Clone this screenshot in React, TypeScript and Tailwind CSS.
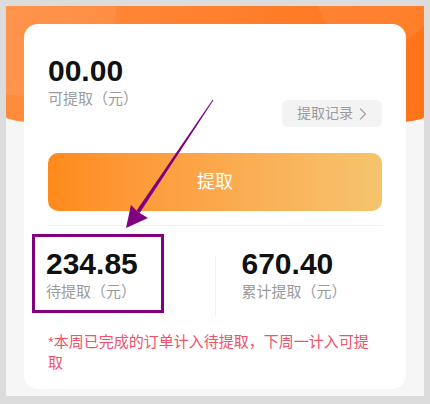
import React from 'react';

const cjk = "font-['Liberation_Sans','Noto_Sans_CJK_SC',sans-serif]";

const Stat: React.FC<{ value: string; label: string; className?: string }> = ({ value, label, className }) => (
  <div className={className}>
    <p className="text-[30px] leading-[36px] font-bold text-[#111]">{value}</p>
    <p className="text-[15px] leading-[20px] text-[#9b9b9b]">{label}</p>
  </div>
);

export default function App() {
  return (
    <div className={`relative w-[430px] h-[404px] bg-[#dcdcdc] pt-[6px] px-[6px] pb-[8px] ${cjk}`}>
      <div className="relative h-full bg-[#f6f6f6] overflow-hidden">
        {/* orange header */}
        <div className="relative h-[123px] rounded-b-[50%_12px] bg-linear-to-r from-[#ff8c3e] to-[#ff7419] overflow-hidden">
          <div className="absolute -left-[70px] -top-[90px] w-[180px] h-[180px] rounded-full bg-white/[0.07]" />
          <div className="absolute left-[310px] -top-[70px] w-[120px] h-[110px] rounded-full bg-white/[0.07]" />
        </div>

        {/* card */}
        <div className="relative -mt-[105px] mx-[18px] bg-white rounded-[14px] px-6 pt-[29px] pb-4">
          <div className="flex items-start justify-between">
            <Stat value="00.00" label="可提取（元）" />
            <button className="mt-[47px] h-[27px] w-[100px] rounded-[6px] bg-[#f3f3f3] flex items-center justify-center gap-[6px] text-[14px] text-[#9b9b9b]">
              <span>提取记录</span>
              <svg width="8" height="12" viewBox="0 0 8 12" fill="none">
                <path d="M1.5 1 L6.5 6 L1.5 11" stroke="#a5a5a5" strokeWidth="1.3" strokeLinecap="round" strokeLinejoin="round" />
              </svg>
            </button>
          </div>

          <button className="mt-[26px] w-full h-[58px] rounded-[10px] bg-linear-to-r from-[#ff8a1a] to-[#f5c46e] text-white text-[18px]">
            提取
          </button>

          <div className="mt-[14px] h-px bg-[#f2f2f2]" />

          <div className="mt-5 flex">
            <div className="flex-1">
              <Stat value="234.85" label="待提取（元）" className="-ml-[2px]" />
            </div>
            <div className="w-px h-[60px] mt-[11px] bg-[#f0f0f0]" />
            <div className="flex-1">
              <Stat value="670.40" label="累计提取（元）" className="pl-[26px]" />
            </div>
          </div>

          <p className="mt-[14px] text-[15px] leading-[21px] text-[#f2506b]">
            *本周已完成的订单计入待提取，下周一计入可提取
          </p>
        </div>
      </div>

      {/* annotation */}
      <div className="absolute left-[32px] top-[234px] w-[132px] h-[79px] border-[3px] border-[#800080]" />
      <svg className="absolute inset-0 pointer-events-none" width="430" height="404" viewBox="0 0 430 404">
        <polygon points="212.6,99.7 213.4,100.3 139.7,213.1 136.3,210.9" fill="#800080" />
        <polygon points="126,228 131,205 138,212 148,218" fill="#800080" />
      </svg>
    </div>
  );
}
